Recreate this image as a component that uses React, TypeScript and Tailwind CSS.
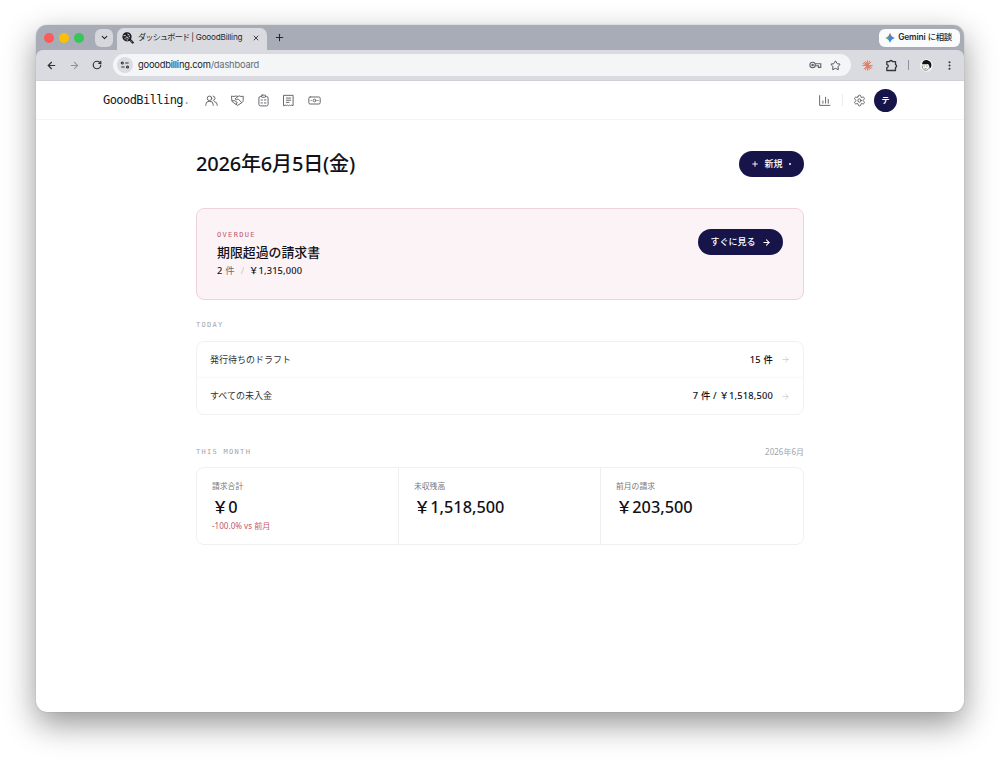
import {
  ArrowLeft,
  ArrowRight,
  ChevronDown,
  Plus,
  RotateCw,
  Settings,
  Star,
  X,
} from "lucide-react";

// full-width yen sign, as ja-JP currency formatting gives
const YEN = "\uFFE5";

const METRICS = [
  { label: "請求合計", value: "0", note: "-100.0% vs 前月" },
  { label: "未収残高", value: "1,518,500" },
  { label: "前月の請求", value: "203,500" },
];

const TODAY = [
  { label: "発行待ちのドラフト", value: "15 件" },
  { label: "すべての未入金", value: `7 件 / ${YEN}1,518,500` },
];

const NAV_ICONS = [
  {
    name: "clients",
    d: "M12.5 8a4.2 4.2 0 1 1-8.4 0 4.2 4.2 0 0 1 8.4 0ZM1.5 21v-1.5a6 6 0 0 1 6-6h1.6a6 6 0 0 1 6 6V21M15 3.8a4.2 4.2 0 0 1 0 8.3M17.5 14a6 6 0 0 1 5 6v1",
  },
  {
    name: "deals",
    d: "M1.5 4c3 .9 5.500.6 8-.5l3 1.200L15 3.500c2.500 1.100 4.500 1.400 7.500.5v8c0 1.600-.8 2.700-2 3.600L12.500 21 4 15.500c-1.500-1-2.500-2-2.500-3.500zM12.500 4.700 7.500 9c1 2 3.500 1.800 5.500 0l6.500 6.500M2 12.500h5l4.500 3-2 3.500",
  },
  {
    name: "quotes",
    d: "M8 4.5H6.5a3 3 0 0 0-3 3V19a3 3 0 0 0 3 3h11a3 3 0 0 0 3-3V7.5a3 3 0 0 0-3-3H16M9.5 2h5A1.5 1.5 0 0 1 16 3.500v1A1.500 1.500 0 0 1 14.500 6h-5A1.500 1.500 0 0 1 8 4.500v-1A1.500 1.500 0 0 1 9.500 2ZM13.500 11h3M13.500 16.500h3M7.500 11h2.500M7.500 16.500h2.500",
  },
  {
    name: "invoices",
    d: "M3.5 2.500h17v19l-2.500-1-2 1-2-1-2 1-2-1-2 1-2-1-2.500 1zM8 7.500h8M8 11.500h8M8 15.500h5",
  },
  {
    name: "payments",
    d: "M4 5.500h16a2.500 2.500 0 0 1 2.500 2.500v8a2.500 2.500 0 0 1-2.500 2.500H4A2.500 2.500 0 0 1 1.500 16V8A2.500 2.500 0 0 1 4 5.500ZM14.500 12a2.500 2.500 0 1 1-5 0 2.500 2.500 0 0 1 5 0ZM5.500 12h.5M18 12h.5",
  },
];

function Favicon() {
  return (
    <svg width="12" height="12" viewBox="0 0 12 12" fill="none">
      <circle cx="5" cy="4.8" r="4" stroke="#17181c" strokeWidth="1.3" fill="#3a3c42" />
      <path d="M1.5 3.6h2.5M5.5 1.8l1.8 1.2M2.6 6.6l2.2-1.6 1.8 1.4M4.500 8h1.500M7 4.400h1" stroke="#d9dbe1" strokeWidth=".9" />
      <path d="M4.400 1.500v2.500M2 5h2" stroke="#111" strokeWidth="1.2" />
      <path d="m8 7.800 2.700 2.700" stroke="#17181c" strokeWidth="2.2" strokeLinecap="round" />
      <path d="m8.700 8.500 1.500 1.500" stroke="#d9dbe1" strokeWidth=".6" />
    </svg>
  );
}

function SiteControls() {
  return (
    <svg width="10" height="8" viewBox="0 0 10 8" fill="none" stroke="#303238" strokeWidth="1.1">
      <circle cx="2.3" cy="2" r="1" />
      <path d="M5.2 2h3.4M1.2 6h3.4" />
      <circle cx="7.5" cy="6" r="1" />
    </svg>
  );
}

function KeyIcon() {
  return (
    <svg width="13" height="8" viewBox="0 0 13 8" fill="none" stroke="#606369" strokeWidth="1.1">
      <circle cx="3.6" cy="4" r="2.7" />
      <circle cx="3.6" cy="4" r=".7" fill="#606369" />
      <path d="M6.2 2.8h5.6v3.600H9.400V4.800H6.400" />
    </svg>
  );
}

function PuzzleIcon() {
  return (
    <svg width="13" height="13" viewBox="0 0 13 13" fill="none" stroke="#33353b" strokeWidth="1.3" strokeLinejoin="round">
      <path d="M1.8 2.6h2.9a1.3 1.1 0 0 1 2.600 0h3.200v3.100a1.100 1.300 0 0 1 0 2.600v3.200H1.800V8.600a1.500 1.500 0 0 0 0-3z" />
    </svg>
  );
}

function Burst() {
  return (
    <svg width="11" height="11" viewBox="0 0 12 12" stroke="#e07f63" strokeWidth="1.05" strokeLinecap="round">
      <path d="M6 .8v10.400M.8 6h10.400M2.300 2.300l7.400 7.400M9.700 2.300 2.300 9.700M4 1.600l4 8.800M8.300 1.400 3.700 10.600M1.200 3.800l9.600 4.400" />
    </svg>
  );
}

function ProfilePicture() {
  return (
    <svg width="13" height="13" viewBox="0 0 13 13">
      <circle cx="6.5" cy="6.5" r="6.2" fill="#f7f7f7" />
      <path d="M2 5.2C2.4 1.8 5.2.5 8 1.4c3 .9 4.1 4 3 6.8l-1.3 1.4c-.2-2-.4-3.6-1.8-4.6C6 5.6 4 5 2 5.2Z" fill="#111216" />
      <path d="M3.600 7h1.200M6.400 7h1.200M4.600 9.400c.8.5 1.500.4 2.100-.1M2.200 6.500c0 2.800 1.400 4.700 3.200 4.900 1.800.1 3.400-1.100 3.900-2.900" fill="none" stroke="#44464b" strokeWidth=".6" />
    </svg>
  );
}

function GeminiSpark() {
  return (
    <svg width="10" height="10" viewBox="0 0 10 10">
      <defs>
        <linearGradient id="spark" x1="0" y1=".3" x2="1" y2=".6">
          <stop offset="0" stopColor="#f3b51f" />
          <stop offset=".3" stopColor="#49a970" />
          <stop offset=".55" stopColor="#3f84ee" />
          <stop offset="1" stopColor="#3c7df0" />
        </linearGradient>
        <linearGradient id="spark-top" x1="0" y1="0" x2="0" y2="1">
          <stop offset="0" stopColor="#ea4a40" />
          <stop offset=".45" stopColor="#ea4a40" stopOpacity="0" />
        </linearGradient>
      </defs>
      <path d="M5 0C5.7 2.6 7.4 4.3 10 5 7.4 5.7 5.7 7.4 5 10 4.3 7.4 2.6 5.7 0 5 2.6 4.3 4.3 2.6 5 0Z" fill="url(#spark)" />
      <path d="M5 0C5.7 2.6 7.4 4.3 10 5 7.4 5.7 5.7 7.4 5 10 4.3 7.4 2.6 5.7 0 5 2.6 4.3 4.3 2.6 5 0Z" fill="url(#spark-top)" />
    </svg>
  );
}

function TabStrip() {
  return (
    <div className="flex h-[25px] items-center bg-[#a8acb7] pl-2 pr-1">
      <div className="flex gap-[5px]">
        <span className="size-[10px] rounded-full bg-[#fc5b5a]" />
        <span className="size-[10px] rounded-full bg-[#fac005]" />
        <span className="size-[10px] rounded-full bg-[#34c659]" />
      </div>
      <div className="ml-[11px] flex h-[18px] w-[18px] items-center justify-center rounded-md bg-[#d5d7dd]">
        <ChevronDown size={9} strokeWidth={3} className="text-[#222429]" />
      </div>
      <div className="ml-[4px] mt-[3px] flex h-[22px] w-[150px] items-center rounded-t-[7px] bg-[#d9dbe1] pl-[5px] pr-[7px] pb-[3px]">
        <Favicon />
        <span className="ml-1 whitespace-nowrap text-[8.2px] leading-none text-[#27292e]">
          <span className="tracking-[-0.85px]">ダッシュボード</span>
          <span className="tracking-[-0.32px]"> | </span>
          <span className="tracking-[-0.2px]">GooodBilling</span>
        </span>
        <X size={8} strokeWidth={2.8} className="ml-auto text-[#333]" />
      </div>
      <Plus size={11} strokeWidth={2.2} className="ml-[7px] text-[#26282d]" />
      <div className="ml-auto flex h-[18px] w-[81px] items-center justify-center gap-[3px] rounded-[6px] bg-[#fafbfd] text-[8.4px] font-semibold tracking-[-0.13px] text-[#26282d]">
        <GeminiSpark />
        <span className="mr-[2px] whitespace-nowrap leading-none">
          Gemini <span className="font-medium tracking-[-0.3px]">に相談</span>
        </span>
      </div>
    </div>
  );
}

function Toolbar() {
  return (
    <div className="bg-[#a8acb7]">
      <div className="flex h-[31px] items-center rounded-t-[7px] border-b border-[#cfd1d6] bg-[#d9dbe1] pl-[10px] pr-[9px] text-[#303238]">
        <ArrowLeft size={11} strokeWidth={2.6} />
        <ArrowRight size={11} strokeWidth={2.2} className="ml-3 text-[#8c9098]" />
        <RotateCw size={10} strokeWidth={2.8} className="ml-[12px]" />
        <div className="ml-[11px] flex h-[22px] w-[738px] items-center rounded-full bg-[#f3f5f7] pl-[4px] pr-[10px]">
          <span className="flex size-4 items-center justify-center rounded-full bg-[#d9dce1]">
            <SiteControls />
          </span>
          <span className="ml-[5px] text-[9.3px] leading-none tracking-[-0.19px] text-[#202227]">
            gooodbilling.com<span className="text-[#666a72]">/dashboard</span>
          </span>
          <span className="ml-auto">
            <KeyIcon />
          </span>
          <Star size={11} strokeWidth={2} className="ml-[8px] text-[#45484f]" />
        </div>
        <div className="ml-auto flex items-center">
          <Burst />
          <span className="ml-[12px]">
            <PuzzleIcon />
          </span>
          <span className="ml-[10px] h-[10px] w-px bg-[#8f939d]" />
          <span className="ml-[11px]">
            <ProfilePicture />
          </span>
          <svg width="3" height="9" viewBox="0 0 3 9" className="ml-[15px] mr-1 fill-[#303238]">
            <circle cx="1.5" cy="1.2" r="1" />
            <circle cx="1.5" cy="4.5" r="1" />
            <circle cx="1.5" cy="7.8" r="1" />
          </svg>
        </div>
      </div>
    </div>
  );
}

function Header() {
  return (
    <header className="flex h-[39px] items-center border-b border-[#f4f4f5] px-[67px] text-[#5d5d63]">
      <span className="w-[86px] whitespace-nowrap font-['DejaVu_Sans_Mono','Liberation_Mono',monospace] text-[12px] leading-none tracking-[-0.56px] text-[#17171d]">
        GooodBilling<span className="text-[#a0a0a8]">.</span>
      </span>
      <nav className="ml-4 flex items-center gap-[12.8px]">
        {NAV_ICONS.map((icon) => (
          <svg
            key={icon.name}
            width="13"
            height="13"
            viewBox="0 0 24 24"
            fill="none"
            stroke="currentColor"
            strokeWidth="1.7"
            strokeLinecap="round"
            strokeLinejoin="round"
          >
            <path d={icon.d} />
          </svg>
        ))}
      </nav>
      <div className="ml-auto flex items-center">
        <svg width="13" height="13" viewBox="0 0 24 24" fill="none" stroke="currentColor" strokeWidth="1.7" strokeLinecap="round">
          <path d="M3 3v18h19M9 13v4M14 6v11M19 10v7" />
        </svg>
        <span className="ml-[11px] h-3 w-px bg-[#ececee]" />
        <Settings size={13} strokeWidth={1.8} className="ml-[10px]" />
        <span className="ml-2 flex size-[23px] items-center justify-center rounded-full bg-[#17144a] text-[8px] font-bold leading-none text-white">
          テ
        </span>
      </div>
    </header>
  );
}

function SectionLabel({ children }: { children: string }) {
  return (
    <h2 className="font-['DejaVu_Sans_Mono','Liberation_Mono',monospace] text-[7px] leading-[10px] tracking-[1.3px] text-[#a3a3a9]">
      {children}
    </h2>
  );
}

function Overdue() {
  return (
    <section className="mt-[31px] flex h-[92px] items-start justify-between rounded-lg border border-[#eed3da] bg-[#fcf3f6] px-5 pt-5">
      <div>
        <p className="mt-px font-['DejaVu_Sans_Mono','Liberation_Mono',monospace] text-[7px] leading-[10px] tracking-[1.33px] text-[#c4566b]">
          OVERDUE
        </p>
        <h2 className="mt-[3px] text-[12.9px] font-medium leading-[18px] text-[#111118]">期限超過の請求書</h2>
        <p className="mt-[4px] flex text-[9.3px] leading-[12px] text-[#6b6b72]">
          <span className="font-medium text-[#17171d]">2</span>
          <span className="ml-[3px]">件</span>
          <span className="ml-[6px] text-[#d0c8cc]">/</span>
          <span className="ml-[5px] font-medium tracking-[0.14px] text-[#17171d]">{YEN}1,315,000</span>
        </p>
      </div>
      <button className="flex h-[26px] w-[85px] items-center justify-center gap-[6px] rounded-full bg-[#17144a] text-[9px] font-medium text-white">
        すぐに見る
        <ArrowRight size={9} strokeWidth={2.8} />
      </button>
    </section>
  );
}

function TodayList() {
  return (
    <section className="mt-[20px]">
      <SectionLabel>TODAY</SectionLabel>
      <div className="mt-[11px] divide-y divide-[#f8f8f9] rounded-lg border border-[#f1f1f3]">
        {TODAY.map((row) => (
          <div key={row.label} className="flex h-[36px] items-center px-[13px] text-[9px] text-[#303036]">
            <span>{row.label}</span>
            <span className="ml-auto text-[9.3px] font-medium tracking-[0.2px] text-[#111118]">{row.value}</span>
            <ArrowRight size={9} strokeWidth={1.8} className="ml-2 text-[#c5c5ca]" />
          </div>
        ))}
      </div>
    </section>
  );
}

function MonthSummary() {
  return (
    <section className="mt-[31px]">
      <div className="flex h-[11px] items-center justify-between">
        <SectionLabel>THIS MONTH</SectionLabel>
        <span className="text-[8px] leading-none text-[#a3a3a9]">2026年6月</span>
      </div>
      <div className="mt-[10px] grid h-[78px] grid-cols-3 divide-x divide-[#efeff1] rounded-lg border border-[#f0f0f2]">
        {METRICS.map((m) => (
          <div key={m.label} className="pl-[15px] pt-[12px]">
            <p className="text-[7.8px] leading-[12px] text-[#77777d]">{m.label}</p>
            <p className="mt-[5px] text-[16.3px] font-medium leading-[20px] text-[#111118]">
              {YEN}
              {m.value}
            </p>
            {m.note && <p className="mt-[3px] text-[8.1px] leading-[12px] text-[#c4566b]">{m.note}</p>}
          </div>
        ))}
      </div>
    </section>
  );
}

export default function App() {
  return (
    <div className="h-[760px] w-[1000px] overflow-hidden bg-white px-9 pt-[25px]">
      <div className="h-[687px] overflow-hidden rounded-[11px] bg-white font-[Inter,'Noto_Sans_CJK_JP',sans-serif] shadow-[0_12px_32px_rgba(0,0,0,0.42),0_0_1px_rgba(0,0,0,0.4)]">
        <TabStrip />
        <Toolbar />
        <div className="font-['Noto_Sans','Noto_Sans_CJK_JP',sans-serif]">
          <Header />
          <main className="mx-auto w-[608px] pt-[31px]">
            <div className="flex h-[26px] items-center justify-between">
              <h1 className="whitespace-nowrap text-[20px] font-medium leading-none tracking-[-0.18px] text-[#111118]">
                2026年6月5日(金)
              </h1>
              <button className="flex h-[26px] w-[65px] items-center justify-center gap-[5px] rounded-full bg-[#17144a] text-[9px] font-medium text-white">
                <Plus size={8} strokeWidth={2.8} />
                新規
                <span className="ml-px mr-px size-[2px] rounded-full bg-white" />
              </button>
            </div>
            <Overdue />
            <TodayList />
            <MonthSummary />
          </main>
        </div>
      </div>
    </div>
  );
}
